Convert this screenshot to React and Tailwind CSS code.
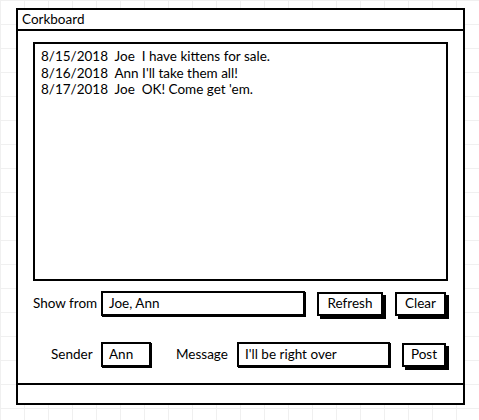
import React from "react";

const font = { fontFamily: "Lato, 'Open Sans', sans-serif" };

function Btn({ children, w }) {
  return (
    <div
      className={`h-[24px] ${w} border-2 border-black bg-white shadow-[3px_3px_0_#000] flex items-center justify-center text-[13.5px] text-black`}
    >
      {children}
    </div>
  );
}

function Input({ children, w }) {
  return (
    <div
      className={`h-[25px] ${w} border-2 border-black bg-white shadow-[1px_1px_0_#000] flex items-center pl-[6px] text-[13.5px] text-black`}
    >
      {children}
    </div>
  );
}

export default function App() {
  return (
    <div
      style={font}
      className="w-[479px] h-[420px] overflow-hidden bg-white bg-[image:linear-gradient(to_right,#f0f0f0_1px,transparent_1px),linear-gradient(to_bottom,#f0f0f0_1px,transparent_1px)] bg-[size:24px_24px] pt-[8px] pl-[16px]"
    >
      <div className="w-[449px] h-[397px] border-2 border-black bg-white flex flex-col">
        <div className="h-[21px] border-b-2 border-black flex items-center pl-[4px] text-[13.5px] text-black">
          Corkboard
        </div>
        <div className="flex-1 flex flex-col pl-[15px] pt-[11px]">
          <div className="w-[415px] h-[239px] border-2 border-black pl-[6px] pt-[4px] text-[13.5px] leading-[16.5px] text-black whitespace-pre">
            <div>{"8/15/2018  Joe  I have kittens for sale."}</div>
            <div>{"8/16/2018  Ann I'll take them all!"}</div>
            <div>{"8/17/2018  Joe  OK! Come get 'em."}</div>
          </div>
          <div className="flex items-center mt-[10px]">
            <div className="w-[68px] text-[13.5px] text-black">Show from</div>
            <Input w="w-[204px]">Joe, Ann</Input>
            <div className="ml-[12px]">
              <Btn w="w-[66px]">Refresh</Btn>
            </div>
            <div className="ml-[12px]">
              <Btn w="w-[51px]">Clear</Btn>
            </div>
          </div>
          <div className="flex items-center mt-[26px]">
            <div className="w-[68px] pl-[18px] text-[13.5px] text-black">Sender</div>
            <Input w="w-[50px]">Ann</Input>
            <div className="ml-[25px] w-[61px] text-[13.5px] text-black">Message</div>
            <Input w="w-[153px]">I'll be right over</Input>
            <div className="ml-[12px]">
              <Btn w="w-[44px]">Post</Btn>
            </div>
          </div>
        </div>
        <div className="h-[20px] border-t-2 border-black"></div>
      </div>
    </div>
  );
}
